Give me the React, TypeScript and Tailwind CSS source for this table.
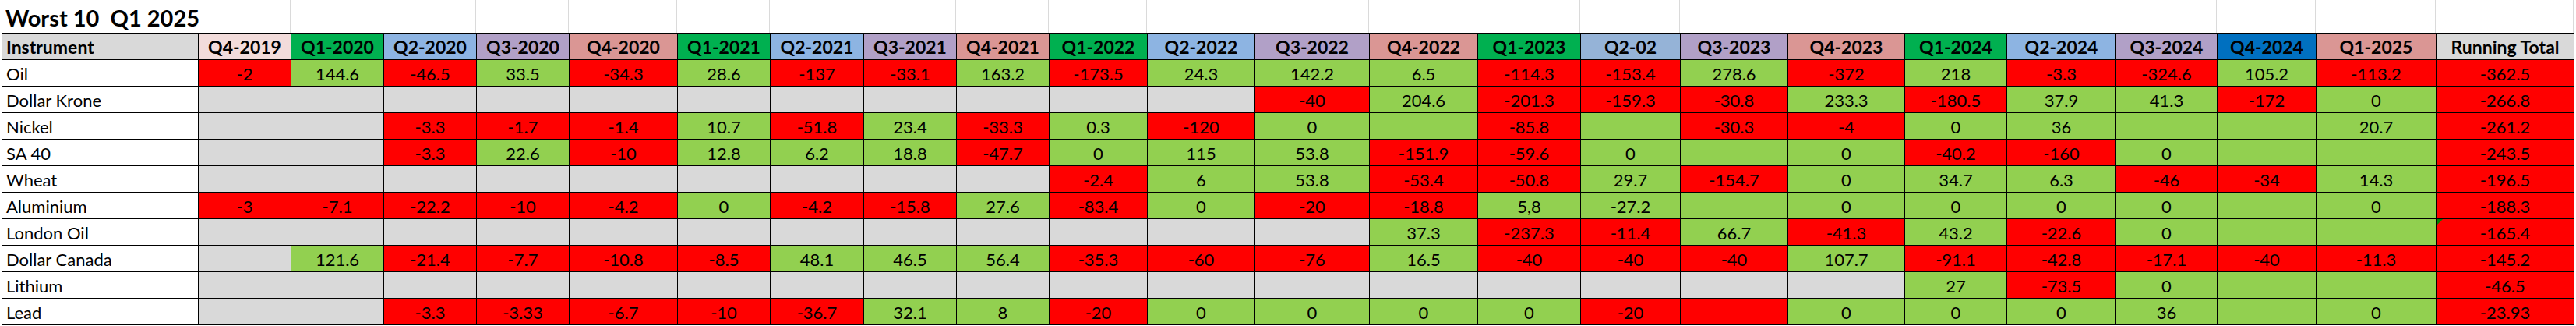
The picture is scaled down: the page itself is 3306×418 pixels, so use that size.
const red = 'bg-[#ff0000]';
const green = 'bg-[#92d050]';
const grey = 'bg-[#d9d9d9]';

const columns = [
  { label: 'Q4-2019', bg: 'bg-[#f2dcdb]' },
  { label: 'Q1-2020', bg: 'bg-[#00b050]' },
  { label: 'Q2-2020', bg: 'bg-[#8db4e2]' },
  { label: 'Q3-2020', bg: 'bg-[#b1a0c7]' },
  { label: 'Q4-2020', bg: 'bg-[#da9694]' },
  { label: 'Q1-2021', bg: 'bg-[#00b050]' },
  { label: 'Q2-2021', bg: 'bg-[#8db4e2]' },
  { label: 'Q3-2021', bg: 'bg-[#b1a0c7]' },
  { label: 'Q4-2021', bg: 'bg-[#da9694]' },
  { label: 'Q1-2022', bg: 'bg-[#00b050]' },
  { label: 'Q2-2022', bg: 'bg-[#8db4e2]' },
  { label: 'Q3-2022', bg: 'bg-[#b1a0c7]' },
  { label: 'Q4-2022', bg: 'bg-[#da9694]' },
  { label: 'Q1-2023', bg: 'bg-[#00b050]' },
  { label: 'Q2-02', bg: 'bg-[#95b3d7]' },
  { label: 'Q3-2023', bg: 'bg-[#b1a0c7]' },
  { label: 'Q4-2023', bg: 'bg-[#da9694]' },
  { label: 'Q1-2024', bg: 'bg-[#00b050]' },
  { label: 'Q2-2024', bg: 'bg-[#8db4e2]' },
  { label: 'Q3-2024', bg: 'bg-[#b1a0c7]' },
  { label: 'Q4-2024', bg: 'bg-[#0070c0]' },
  { label: 'Q1-2025', bg: 'bg-[#da9694]' },
  { label: 'Running Total', bg: 'bg-[#d9d9d9]' },
];

// r = red, g = green, e = grey (no data); value after the colon
const rows: { name: string; cells: string[] }[] = [
  {
    name: 'Oil',
    cells: ['r:-2', 'g:144.6', 'r:-46.5', 'g:33.5', 'r:-34.3', 'g:28.6', 'r:-137', 'r:-33.1', 'g:163.2', 'r:-173.5', 'g:24.3', 'g:142.2', 'g:6.5', 'r:-114.3', 'r:-153.4', 'g:278.6', 'r:-372', 'g:218', 'r:-3.3', 'r:-324.6', 'g:105.2', 'r:-113.2', 'r:-362.5'],
  },
  {
    name: 'Dollar Krone',
    cells: ['e:', 'e:', 'e:', 'e:', 'e:', 'e:', 'e:', 'e:', 'e:', 'e:', 'e:', 'r:-40', 'g:204.6', 'r:-201.3', 'r:-159.3', 'r:-30.8', 'g:233.3', 'r:-180.5', 'g:37.9', 'g:41.3', 'r:-172', 'g:0', 'r:-266.8'],
  },
  {
    name: 'Nickel',
    cells: ['e:', 'e:', 'r:-3.3', 'r:-1.7', 'r:-1.4', 'g:10.7', 'r:-51.8', 'g:23.4', 'r:-33.3', 'g:0.3', 'r:-120', 'g:0', 'g:', 'r:-85.8', 'g:', 'r:-30.3', 'r:-4', 'g:0', 'g:36', 'g:', 'g:', 'g:20.7', 'r:-261.2'],
  },
  {
    name: 'SA 40',
    cells: ['e:', 'e:', 'r:-3.3', 'g:22.6', 'r:-10', 'g:12.8', 'g:6.2', 'g:18.8', 'r:-47.7', 'g:0', 'g:115', 'g:53.8', 'r:-151.9', 'r:-59.6', 'g:0', 'g:', 'g:0', 'r:-40.2', 'r:-160', 'g:0', 'g:', 'g:', 'r:-243.5'],
  },
  {
    name: 'Wheat',
    cells: ['e:', 'e:', 'e:', 'e:', 'e:', 'e:', 'e:', 'e:', 'e:', 'r:-2.4', 'g:6', 'g:53.8', 'r:-53.4', 'r:-50.8', 'g:29.7', 'r:-154.7', 'g:0', 'g:34.7', 'g:6.3', 'r:-46', 'r:-34', 'g:14.3', 'r:-196.5'],
  },
  {
    name: 'Aluminium',
    cells: ['r:-3', 'r:-7.1', 'r:-22.2', 'r:-10', 'r:-4.2', 'g:0', 'r:-4.2', 'r:-15.8', 'g:27.6', 'r:-83.4', 'g:0', 'r:-20', 'r:-18.8', 'g:5,8', 'g:-27.2', 'g:', 'g:0', 'g:0', 'g:0', 'g:0', 'g:', 'g:0', 'r:-188.3'],
  },
  {
    name: 'London Oil',
    cells: ['e:', 'e:', 'e:', 'e:', 'e:', 'e:', 'e:', 'e:', 'e:', 'e:', 'e:', 'e:', 'g:37.3', 'r:-237.3', 'r:-11.4', 'g:66.7', 'r:-41.3', 'g:43.2', 'r:-22.6', 'g:0', 'g:', 'g:', 'r:-165.4'],
  },
  {
    name: 'Dollar Canada',
    cells: ['e:', 'g:121.6', 'r:-21.4', 'r:-7.7', 'r:-10.8', 'r:-8.5', 'g:48.1', 'g:46.5', 'g:56.4', 'r:-35.3', 'r:-60', 'r:-76', 'g:16.5', 'r:-40', 'r:-40', 'r:-40', 'g:107.7', 'r:-91.1', 'r:-42.8', 'r:-17.1', 'r:-40', 'r:-11.3', 'r:-145.2'],
  },
  {
    name: 'Lithium',
    cells: ['e:', 'e:', 'e:', 'e:', 'e:', 'e:', 'e:', 'e:', 'e:', 'e:', 'e:', 'e:', 'e:', 'e:', 'e:', 'e:', 'e:', 'g:27', 'r:-73.5', 'g:0', 'g:', 'g:', 'r:-46.5'],
  },
  {
    name: 'Lead',
    cells: ['e:', 'e:', 'r:-3.3', 'r:-3.33', 'r:-6.7', 'r:-10', 'r:-36.7', 'g:32.1', 'g:8', 'r:-20', 'g:0', 'g:0', 'g:0', 'g:0', 'r:-20', 'r:', 'g:0', 'g:0', 'g:0', 'g:36', 'g:', 'g:0', 'r:-23.93'],
  },
];

const gridCols =
  'grid grid-cols-[252px_119px_119px_119px_119px_139px_119px_120px_119px_119px_126px_138px_147px_139px_132px_128px_138px_150px_131px_140px_130px_127px_154px_177px]';

function cellBg(kind: string) {
  if (kind === 'r') return red;
  if (kind === 'g') return green;
  return grey;
}

export default function App() {
  return (
    <div className="h-[418px] w-[3306px] overflow-hidden bg-white font-['Lato','Liberation_Sans',sans-serif] text-black">
      <div className={`${gridCols} ml-[2px] h-[42px]`}>
        <div className="flex items-center pl-[5px] pt-[2px] whitespace-pre text-[29px] font-bold leading-none">
          Worst 10  Q1 2025
        </div>
        {columns.map((c) => (
          <div key={c.label} className="border-r border-[#dadada]" />
        ))}
      </div>

      <div className="ml-[2px] w-fit border-l border-t border-black">
        <div className={`${gridCols} h-[34px] text-[23px] font-bold leading-none`}>
          <div className="flex items-center border-r border-b border-black bg-[#d9d9d9] pl-[5px] pt-[2px]">Instrument</div>
          {columns.map((c) => (
            <div key={c.label} className={`flex items-center justify-center border-r border-b border-black pt-[2px] ${c.bg}`}>
              {c.label}
            </div>
          ))}
        </div>

        {rows.map((row) => (
          <div key={row.name} className={`${gridCols} h-[34px] text-[22px] leading-none`}>
            <div className="flex items-center border-r border-b border-black bg-white pl-[5px] pt-[2px]">{row.name}</div>
            {row.cells.map((cell, i) => {
              const [kind, value] = cell.split(':');
              const isTriangle = row.name === 'London Oil' && i === row.cells.length - 1;
              return (
                <div
                  key={i}
                  className={`relative flex items-center justify-center border-r border-b border-black pt-[2px] ${cellBg(kind)}`}
                >
                  {isTriangle ? (
                    <svg className="absolute left-0 top-0" width="8" height="8" viewBox="0 0 8 8">
                      <polygon points="0,0 8,0 0,8" fill="#008000" />
                    </svg>
                  ) : null}
                  {value}
                </div>
              );
            })}
          </div>
        ))}
      </div>
    </div>
  );
}
